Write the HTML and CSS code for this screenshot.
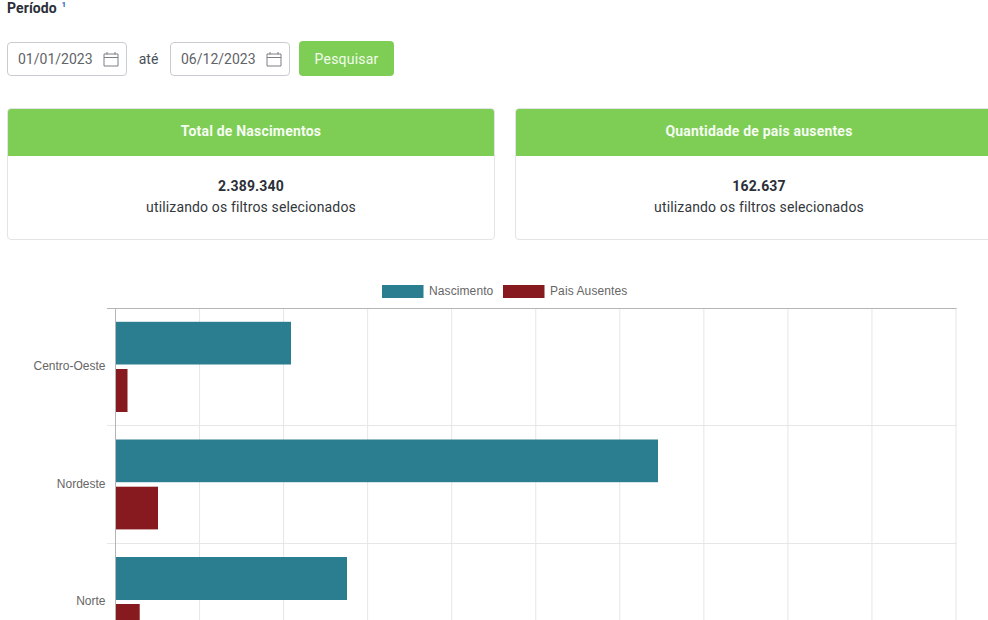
FILE: index.html
```html
<!DOCTYPE html>
<html lang="pt-BR">
<head>
  <meta charset="UTF-8">
  <title>Nascimentos</title>
  <link rel="stylesheet" href="styles.css">
</head>
<body>
  <div class="page">
    <!-- Filtro de periodo -->
    <div class="period-label">Período <sup class="hint">1</sup></div>
    <div class="filters">
      <div class="date-field">
        <span>01/01/2023</span>
        <svg class="calendar" width="16" height="16" viewBox="0 0 16 16"><path d="M1 3h14v12H1zM1 6.500h14M4 1v2.500M12 1v2.500"/></svg>
      </div>
      <span class="until">até</span>
      <div class="date-field">
        <span>06/12/2023</span>
        <svg class="calendar" width="16" height="16" viewBox="0 0 16 16"><path d="M1 3h14v12H1zM1 6.500h14M4 1v2.500M12 1v2.500"/></svg>
      </div>
      <button class="search-btn">Pesquisar</button>
    </div>

    <!-- Totais -->
    <div class="cards">
      <div class="card">
        <div class="card-header">Total de Nascimentos</div>
        <div class="card-body">
          <strong>2.389.340</strong>
          <span>utilizando os filtros selecionados</span>
        </div>
      </div>
      <div class="card">
        <div class="card-header">Quantidade de pais ausentes</div>
        <div class="card-body">
          <strong>162.637</strong>
          <span>utilizando os filtros selecionados</span>
        </div>
      </div>
    </div>

    <!-- Grafico por regiao -->
    <svg class="chart" width="988" height="345" viewBox="0 275 988 345">
      <rect class="teal" x="382" y="285" width="41.500" height="13"/>
      <text class="legend" x="429" y="295">Nascimento</text>
      <rect class="red" x="503" y="285" width="41.500" height="13"/>
      <text class="legend" x="550" y="295">Pais Ausentes</text>

      <g class="grid">
        <path d="M199.550 308V620M283.600 308V620M367.650 308V620M451.700 308V620M535.750 308V620M619.800 308V620M703.850 308V620M787.900 308V620M871.950 308V620M956 308V620"/>
        <path d="M107 425.500H956.500M107 543.500H956.500"/>
      </g>
      <path class="axis" d="M107 308.500H956.500M115.500 308V620"/>

      <rect class="teal" x="116" y="321.800" width="175" height="42.700"/>
      <rect class="red" x="116" y="369" width="11.500" height="43"/>
      <rect class="teal" x="116" y="439.500" width="542" height="42.700"/>
      <rect class="red" x="116" y="486.700" width="42" height="42.700"/>
      <rect class="teal" x="116" y="557" width="231" height="43"/>
      <rect class="red" x="116" y="604" width="23.700" height="43"/>

      <text class="tick" x="105.500" y="370">Centro-Oeste</text>
      <text class="tick" x="105.500" y="488">Nordeste</text>
      <text class="tick" x="105.500" y="605">Norte</text>
    </svg>
  </div>
</body>
</html>
```

FILE: styles.css
```css
/* Global */
body {
  margin: 0;
  background: #fff;
  overflow: hidden;
  font-family: Roboto, sans-serif;
  color: #212529;
}

.page {
  width: 988px;
  height: 620px;
  overflow: hidden;
}

/* Periodo */
.period-label {
  padding: 0 0 0 7px;
  height: 41px;
  font-size: 14px;
  font-weight: 700;
  letter-spacing: 0.1px;
  line-height: 16px;
  color: #2b2f38;
}

.hint {
  margin-left: 1px;
  font-size: 8px;
  font-weight: 700;
  line-height: 0;
  color: #2f62c4;
}

.filters {
  display: flex;
  align-items: center;
  height: 35px;
  padding-left: 7px;
}

.date-field {
  display: flex;
  align-items: center;
  justify-content: space-between;
  box-sizing: border-box;
  width: 120px;
  height: 34px;
  margin-top: 1px;
  padding: 0 7px 0 10px;
  border: 1px solid #c9cdd2;
  border-radius: 4px;
  font-size: 14px;
  color: #5f6469;
}

.calendar {
  fill: none;
  stroke: #7b7f84;
  stroke-width: 1;
}

.until {
  width: 43px;
  text-align: center;
  font-size: 14px;
  color: #495057;
}

.search-btn {
  width: 95px;
  height: 35px;
  margin-left: 9px;
  border: none;
  border-radius: 4px;
  background-color: #7ece55;
  color: #f2fbec;
  font-family: Roboto, sans-serif;
  font-size: 14px;
  letter-spacing: 0.2px;
}

/* Cards */
.cards {
  display: grid;
  grid-template-columns: 488px 488px;
  gap: 20px;
  margin-top: 32px;
  padding-left: 7px;
}

.card {
  box-sizing: border-box;
  height: 132px;
  border: 1px solid #e2e4e6;
  border-radius: 4px;
  overflow: hidden;
}

.card-header {
  height: 47px;
  line-height: 45px;
  text-align: center;
  background-color: #7ece55;
  color: #f6fcf2;
  font-size: 14px;
  font-weight: 700;
  letter-spacing: 0.2px;
}

.card-body {
  display: flex;
  flex-direction: column;
  align-items: center;
  padding-top: 20px;
  font-size: 14px;
  line-height: 21px;
  letter-spacing: 0.14px;
  color: #33373c;
}

.card-body strong {
  font-weight: 700;
  letter-spacing: 0.2px;
  color: #2b2f38;
}

/* Grafico */
.chart {
  display: block;
  margin-top: 35px;
  font-family: "Liberation Sans", Arial, sans-serif;
}

.teal {
  fill: #2b7d90;
}

.red {
  fill: #861a1e;
}

.grid path {
  fill: none;
  stroke: #e6e6e6;
  stroke-width: 1;
}

.axis {
  fill: none;
  stroke: #b5b5b5;
  stroke-width: 1;
}

.legend,
.tick {
  font-size: 12px;
  fill: #666;
}

.legend {
  letter-spacing: 0.1px;
}

.tick {
  text-anchor: end;
}
```
